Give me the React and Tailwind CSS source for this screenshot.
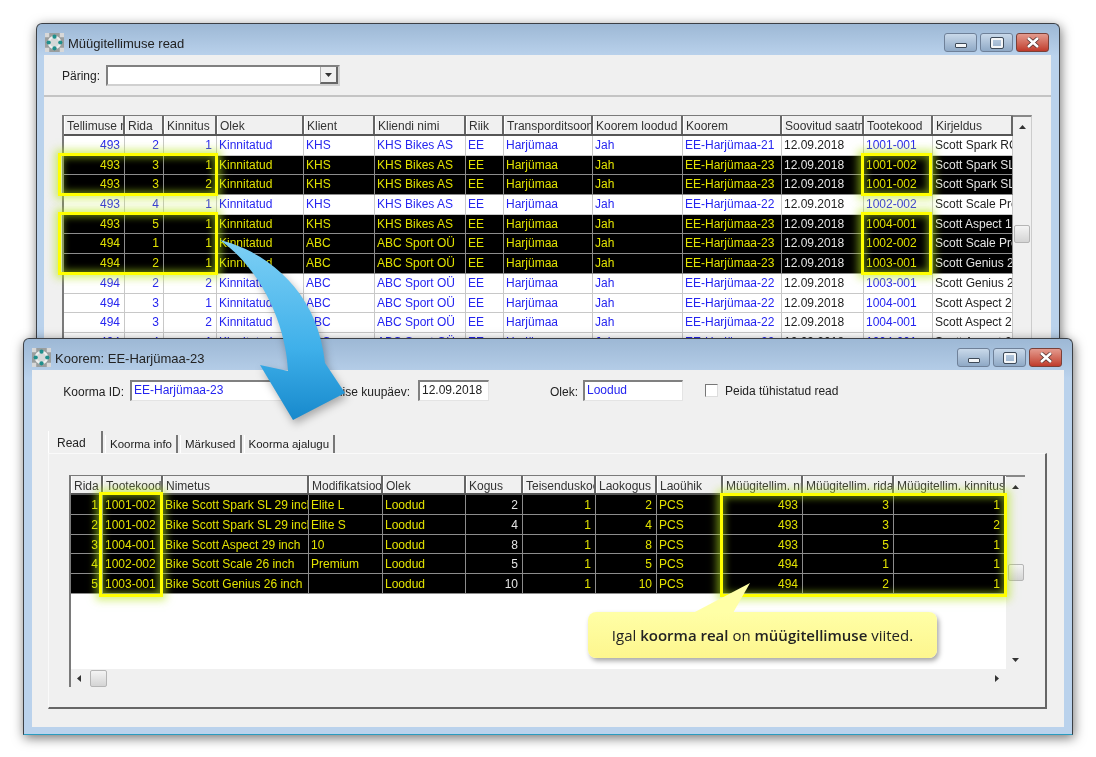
import React from 'react';

const orderCols = 'grid-cols-[61px_39px_53px_87px_71px_91px_38px_89px_90px_99px_82px_69px_80px]';
const loadCols = 'grid-cols-[32px_60px_146px_74px_83px_57px_73px_61px_66px_80px_91px_111px]';

const orderHead = ['Tellimuse nr', 'Rida', 'Kinnitus', 'Olek', 'Klient', 'Kliendi nimi', 'Riik', 'Transporditsoon', 'Koorem loodud', 'Koorem', 'Soovitud saatmine', 'Tootekood', 'Kirjeldus'];
const orderRight = [0, 1, 2];
const orderPlain = [10, 12];

const orderRows = [
    { on: false, cells: ['493', '2', '1', 'KHS', 'KHS Bikes AS', 'EE-Harjümaa-21', '1001-001', 'Scott Spark RC'] },
    { on: true, cells: ['493', '3', '1', 'KHS', 'KHS Bikes AS', 'EE-Harjümaa-23', '1001-002', 'Scott Spark SL'] },
    { on: true, cells: ['493', '3', '2', 'KHS', 'KHS Bikes AS', 'EE-Harjümaa-23', '1001-002', 'Scott Spark SL'] },
    { on: false, cells: ['493', '4', '1', 'KHS', 'KHS Bikes AS', 'EE-Harjümaa-22', '1002-002', 'Scott Scale Pre'] },
    { on: true, cells: ['493', '5', '1', 'KHS', 'KHS Bikes AS', 'EE-Harjümaa-23', '1004-001', 'Scott Aspect 1'] },
    { on: true, cells: ['494', '1', '1', 'ABC', 'ABC Sport OÜ', 'EE-Harjümaa-23', '1002-002', 'Scott Scale Pre'] },
    { on: true, cells: ['494', '2', '1', 'ABC', 'ABC Sport OÜ', 'EE-Harjümaa-23', '1003-001', 'Scott Genius 2'] },
    { on: false, cells: ['494', '2', '2', 'ABC', 'ABC Sport OÜ', 'EE-Harjümaa-22', '1003-001', 'Scott Genius 2'] },
    { on: false, cells: ['494', '3', '1', 'ABC', 'ABC Sport OÜ', 'EE-Harjümaa-22', '1004-001', 'Scott Aspect 2'] },
    { on: false, cells: ['494', '3', '2', 'ABC', 'ABC Sport OÜ', 'EE-Harjümaa-22', '1004-001', 'Scott Aspect 2'] },
    { on: false, cells: ['494', '4', '1', 'ABC', 'ABC Sport OÜ', 'EE-Harjümaa-22', '1004-001', 'Scott Aspect 2'] },
];

const expandOrder = ({ on, cells: [nr, rida, kin, klient, nimi, koorem, kood, kirjeldus] }) => ({
    on,
    cells: [nr, rida, kin, 'Kinnitatud', klient, nimi, 'EE', 'Harjümaa', 'Jah', koorem, '12.09.2018', kood, kirjeldus],
});

const loadHead = ['Rida', 'Tootekood', 'Nimetus', 'Modifikatsioon', 'Olek', 'Kogus', 'Teisenduskoef', 'Laokogus', 'Laoühik', 'Müügitellim. nr.', 'Müügitellim. rida', 'Müügitellim. kinnitus'];
const loadRight = [0, 5, 6, 7, 9, 10, 11];
const loadPlain = [5];

const loadRows = [
    ['1', '1001-002', 'Bike Scott Spark SL 29 inch', 'Elite L', 'Loodud', '2', '1', '2', 'PCS', '493', '3', '1'],
    ['2', '1001-002', 'Bike Scott Spark SL 29 inch', 'Elite S', 'Loodud', '4', '1', '4', 'PCS', '493', '3', '2'],
    ['3', '1004-001', 'Bike Scott Aspect 29 inch', '10', 'Loodud', '8', '1', '8', 'PCS', '493', '5', '1'],
    ['4', '1002-002', 'Bike Scott Scale 26 inch', 'Premium', 'Loodud', '5', '1', '5', 'PCS', '494', '1', '1'],
    ['5', '1003-001', 'Bike Scott Genius 26 inch', '', 'Loodud', '10', '1', '10', 'PCS', '494', '2', '1'],
].map((cells) => ({ on: true, cells }));

const AppIcon = () => (
    <svg width="19" height="19" viewBox="0 0 18 18" className="shrink-0">
        <rect width="18" height="18" fill="#9a9e9e" />
        <path d="M0 0h4v4H0zM14 0h4v4h-4zM0 14h4v4H0zM14 14h4v4h-4z" fill="#d8d8d8" />
        <circle cx="9" cy="9" r="5.5" fill="#d4d8d8" stroke="#eef0f0" strokeWidth="2" />
        <circle cx="9" cy="3.5" r="2" fill="#1f8f8c" />
        <circle cx="9" cy="14.5" r="2" fill="#1f8f8c" />
        <circle cx="3.5" cy="9" r="2" fill="#1f8f8c" />
        <circle cx="14.5" cy="9" r="2" fill="#1f8f8c" />
    </svg>
);

const WinButtons = () => (
    <div className="flex gap-[3px]">
        <div className="w-[33px] h-[19px] rounded-[3px] border border-[#6f8199] bg-gradient-to-b from-[#c9d9ea] to-[#8fa9c6] flex items-center justify-center">
            <div className="w-[12px] h-[5px] mt-[5px] bg-[#f4f6f8] border border-[#3e4a58] rounded-[1px]" />
        </div>
        <div className="w-[33px] h-[19px] rounded-[3px] border border-[#6f8199] bg-gradient-to-b from-[#c9d9ea] to-[#8fa9c6] flex items-center justify-center">
            <div className="w-[12px] h-[10px] bg-transparent border-2 border-[#f4f6f8] outline outline-[#3e4a58] rounded-[1px]" />
        </div>
        <div className="w-[33px] h-[19px] rounded-[3px] border border-[#7a4038] bg-gradient-to-b from-[#e39a8e] to-[#bf3a2b] flex items-center justify-center">
            <svg width="14" height="11" viewBox="0 0 14 11">
                <path d="M2 1l10 9M12 1L2 10" stroke="#4a2a28" strokeWidth="4" />
                <path d="M2 1l10 9M12 1L2 10" stroke="#fff" strokeWidth="2.6" />
            </svg>
        </div>
    </div>
);

const Window = ({ className, bodyClass, title, children }) => (
    <div className={`absolute flex flex-col rounded-t-[6px] border border-[#3c4046] border-b-[#2a9cc0] bg-gradient-to-b from-[#9db8d5] to-[#bad2ec] to-[10%] shadow-[1px_3px_12px_rgba(0,0,0,0.55)] ${className}`}>
        <div className="h-[31px] shrink-0 flex items-center justify-between pl-[8px] pr-[10px] pt-[6px]">
            <div className="flex items-center gap-[4px] text-[13px] text-[#222]">
                <AppIcon />
                <span className="mt-[2px]">{title}</span>
            </div>
            <WinButtons />
        </div>
        <div className={`flex-1 mb-[7px] bg-[#f0f0f0] flex flex-col ${bodyClass}`}>{children}</div>
    </div>
);

const ArrowGlyph = ({ d, className }) => (
    <svg width="9" height="9" viewBox="0 0 9 9" className={className}>
        <path d={d} fill="#333" />
    </svg>
);

const Grid = ({ cols, head, right, plain, rows, rowClass, headClass, className, children }) => (
    <div className={`relative border-t border-l-2 border-[#7a7a7a] bg-white overflow-hidden ${className}`}>
        <div className={`grid ${cols} w-max bg-[#f0f0f0] border-b-2 border-[#555] ${headClass}`}>
            {head.map((h, i) => (
                <div key={i} className="pl-[2px] leading-[20px] text-[#333] whitespace-nowrap overflow-hidden border-r-2 border-[#666] border-l border-l-white">
                    {h}
                </div>
            ))}
        </div>
        {rows.map((r, ri) => (
            <div key={ri} className={`grid ${cols} w-max ${rowClass} border-b ${r.on ? 'bg-black border-[#8c8c8c]' : 'bg-white border-[#c8c8c8]'}`}>
                {r.cells.map((c, i) => {
                    const isPlain = plain.includes(i);
                    const color = r.on
                        ? isPlain ? 'text-[#e4e4e4]' : 'text-[#e2e200]'
                        : isPlain ? 'text-[#222]' : 'text-[#2525f0]';
                    return (
                        <div key={i} className={`whitespace-nowrap overflow-hidden border-r ${r.on ? 'border-[#8c8c8c]' : 'border-[#c8c8c8]'} ${color} ${right.includes(i) ? 'text-right pr-[4px]' : 'pl-[2px]'}`}>
                            {c}
                        </div>
                    );
                })}
            </div>
        ))}
        {children}
    </div>
);

const Sunken = ({ className, children }) => (
    <div className={`h-[21px] bg-white border-t-2 border-l-2 border-[#808080] border-r border-b border-r-[#e4e4e4] border-b-[#e4e4e4] px-[2px] leading-[17px] whitespace-nowrap overflow-hidden ${className}`}>
        {children}
    </div>
);

const Tab = ({ active, children }) => (
    <div className={`border-r-2 border-[#777] border-l border-l-white bg-[#f0f0f0] ${active ? 'h-[22px] w-[55px] pl-[8px] pt-[3px] text-[12px]' : 'h-[18px] px-[4px] pt-[1px] text-[11.5px]'}`}>
        {children}
    </div>
);

const Glow = ({ className }) => (
    <div className={`absolute border-[3px] border-[#ffff00] shadow-[0_0_8px_3px_rgba(181,230,29,0.6),inset_0_0_7px_2px_rgba(181,230,29,0.55)] ${className}`} />
);

export default function App() {
    return (
        <div className="relative w-[1096px] h-[757px] overflow-hidden bg-white text-[12px] text-[#222] font-['Liberation_Sans',sans-serif] blur-[0.35px]">
            {/* sales order lines */}
            <Window className="left-[36px] top-[23px] w-[1024px] h-[325px]" bodyClass="ml-[7px] mr-[8px]" title="Müügitellimuse read">
                <div className="h-[42px] shrink-0 border-b-2 border-[#c4c4c4] flex items-center pl-[18px]">
                    <span className="w-[44px] pt-[2px]">Päring:</span>
                    <div className="w-[234px] h-[21px] bg-white border-t-2 border-l-2 border-[#808080] border-r-2 border-b-2 border-r-[#d0d0d0] border-b-[#d0d0d0] flex justify-end">
                        <div className="w-[18px] bg-[#f0f0f0] border-l border-[#b0b0b0] border-r-2 border-b-2 border-r-[#666] border-b-[#666] flex items-center justify-center">
                            <ArrowGlyph d="M1 3h7L4.5 7z" />
                        </div>
                    </div>
                </div>
                <div className="flex ml-[18px] mt-[18px]">
                    <Grid cols={orderCols} head={orderHead} right={orderRight} plain={orderPlain} rows={orderRows.map(expandOrder)} headClass="h-[20px]" rowClass="h-[19.7px] leading-[18px]" className="w-[951px] h-[280px]" />
                    <div className="w-[19px] h-[280px] border-t-2 border-[#888] border-r border-r-[#ccc] bg-[#f0f0f0] flex flex-col items-center pt-[6px]">
                        <ArrowGlyph d="M1 6h7L4.5 2z" />
                        <div className="w-[16px] h-[18px] mt-[93px] rounded-[2px] border border-[#b5b5b5] bg-gradient-to-b from-[#f4f4f4] to-[#d4d4d4]" />
                    </div>
                </div>
            </Window>

            {/* load window */}
            <Window className="left-[23px] top-[338px] w-[1050px] h-[397px]" bodyClass="ml-[8px] mr-[8px]" title="Koorem: EE-Harjümaa-23">
                <div className="flex items-center h-[21px] mt-[10px] shrink-0">
                    <span className="w-[92px] text-right pt-[2px]">Koorma ID:</span>
                    <Sunken className="w-[170px] ml-[6px] text-[#2525f0]">EE-Harjümaa-23</Sunken>
                    <span className="w-[110px] text-right pt-[2px]">Saatmise kuupäev:</span>
                    <Sunken className="w-[71px] ml-[8px]">12.09.2018</Sunken>
                    <span className="w-[89px] text-right pt-[2px]">Olek:</span>
                    <Sunken className="w-[100px] ml-[5px] text-[#2525f0]">Loodud</Sunken>
                    <div className="w-[13px] h-[13px] ml-[22px] bg-white border-t border-l border-[#777] border-r border-b border-r-[#ddd] border-b-[#ddd]" />
                    <span className="ml-[7px]">Peida tühistatud read</span>
                </div>
                <div className="flex items-end gap-[2px] mt-[30px] ml-[16px] h-[22px] shrink-0">
                    <Tab active>Read</Tab>
                    <Tab>Koorma info</Tab>
                    <Tab>Märkused</Tab>
                    <Tab>Koorma ajalugu</Tab>
                </div>
                <div className="ml-[16px] w-[999px] h-[256px] shrink-0 border-t border-l border-[#fafafa] border-r-2 border-b-2 border-r-[#666] border-b-[#666] pl-[20px] pt-[21px]">
                    <div className="flex w-[956px] h-[212px] relative">
                        <div className="flex flex-col">
                            <Grid cols={loadCols} head={loadHead} right={loadRight} plain={loadPlain} rows={loadRows} headClass="h-[19px]" rowClass="h-[19.75px] leading-[20px]" className="w-[937px] h-[194px]" />
                            <div className="w-[937px] h-[18px] border-l-2 border-[#7a7a7a] bg-[#f0f0f0] flex items-center">
                                <ArrowGlyph d="M6 1v7L2 4.5z" className="ml-[4px]" />
                                <div className="w-[17px] h-[17px] ml-[6px] rounded-[2px] border border-[#b5b5b5] bg-gradient-to-b from-[#f4f4f4] to-[#d4d4d4]" />
                                <ArrowGlyph d="M3 1v7l4-3.5z" className="ml-[885px]" />
                            </div>
                        </div>
                        <div className="w-[19px] h-[212px] border-t-2 border-[#888] bg-[#f0f0f0] flex flex-col items-center pt-[6px]">
                            <ArrowGlyph d="M1 6h7L4.5 2z" />
                            <div className="w-[16px] h-[17px] mt-[72px] rounded-[2px] border border-[#b5b5b5] bg-gradient-to-b from-[#f4f4f4] to-[#d4d4d4]" />
                            <ArrowGlyph d="M1 3h7L4.5 7z" className="mt-[74px]" />
                        </div>
                    </div>
                </div>
            </Window>

            {/* annotations on top of the screenshot */}
            <Glow className="left-[58px] top-[153px] w-[160px] h-[43px]" />
            <Glow className="left-[58px] top-[212px] w-[160px] h-[63px]" />
            <Glow className="left-[861px] top-[153px] w-[71px] h-[43px]" />
            <Glow className="left-[861px] top-[212px] w-[71px] h-[63px]" />
            <Glow className="left-[99px] top-[492px] w-[64px] h-[105px]" />
            <Glow className="left-[720px] top-[493px] w-[287px] h-[104px]" />

            <svg width="1096" height="757" viewBox="0 0 1096 757" className="absolute left-0 top-0 pointer-events-none drop-shadow-[2px_4px_4px_rgba(0,0,0,0.3)]">
                <defs>
                    <linearGradient id="arrowFill" x1="0" y1="0" x2="0" y2="1">
                        <stop offset="0" stopColor="#7ed0f5" />
                        <stop offset="0.6" stopColor="#3fb0ea" />
                        <stop offset="1" stopColor="#1789cc" />
                    </linearGradient>
                </defs>
                <path d="M220 240 C268 252 318 292 325 363 L345 393 L293 420 L260 365 L288 371 C286 325 262 270 220 240 Z" fill="url(#arrowFill)" />
            </svg>

            <div className="absolute left-[588px] top-[612px] w-[349px] h-[46px] rounded-[8px] bg-gradient-to-b from-[#ffffa6] to-[#fdf68e] shadow-[2px_3px_5px_rgba(0,0,0,0.35)] flex items-center justify-center text-[15px] text-[#222] font-['Open_Sans',sans-serif]">
                <span>Igal <b className="font-semibold">koorma real</b> on <b className="font-semibold">müügitellimuse</b> viited.</span>
            </div>
            <svg width="70" height="32" viewBox="0 0 70 32" className="absolute left-[685px] top-[583px]">
                <path d="M8 30 L65 0 L48 30 Z" fill="#ffffa6" />
            </svg>
        </div>
    );
}
